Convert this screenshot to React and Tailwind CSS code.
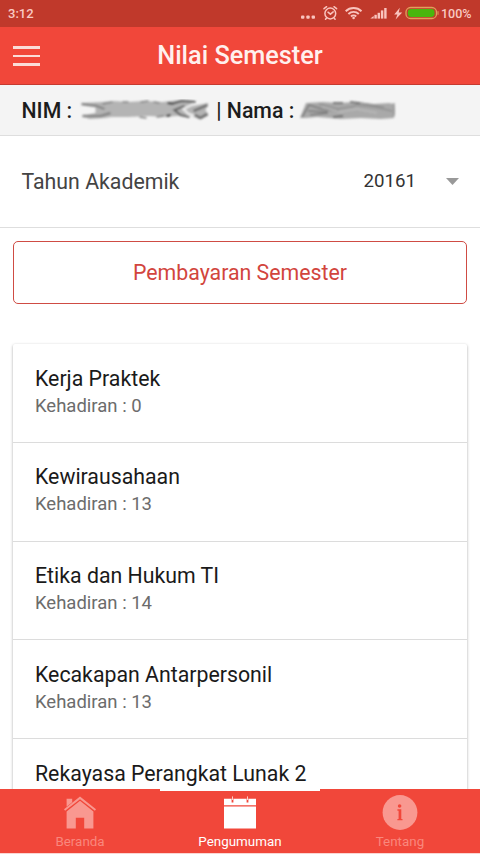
import React, { useState } from "react";

const courses = [
  { name: "Kerja Praktek", attendance: 0 },
  { name: "Kewirausahaan", attendance: 13 },
  { name: "Etika dan Hukum TI", attendance: 14 },
  { name: "Kecakapan Antarpersonil", attendance: 13 },
  { name: "Rekayasa Perangkat Lunak 2" },
];

function StatusBar() {
  return (
    <div className="flex h-[27px] shrink-0 items-center bg-[#c0392b] pl-2 pr-2 text-[13px] font-medium text-[#f9c9c3]">
      <span className="grow pt-px">3:12</span>
      <svg width="141" height="27" viewBox="300 0 141 27" fill="none">
        <g fill="#f9c4be">
          <rect x="301" y="15.5" width="3.4" height="3.2" rx="1" />
          <rect x="306.3" y="15.5" width="3.4" height="3.2" rx="1" />
          <rect x="311.6" y="15.5" width="3.4" height="3.2" rx="1" />
        </g>
        {/* alarm */}
        <g stroke="#f9c4be" strokeWidth="1.5" strokeLinecap="round">
          <circle cx="330.3" cy="13.5" r="5.4" />
          <path d="M324 8.7l2.6-2M336.6 8.7l-2.6-2M328 12.2l2.4 2 2.8-2.3M326.3 18.4l-.8.8M334.3 18.4l.8.8" />
        </g>
        {/* wifi */}
        <g stroke="#f9c4be" strokeWidth="1.9">
          <path d="M345.7 11.2a11.3 11.3 0 0 1 15.8 0" />
          <path d="M348.4 14a7.4 7.4 0 0 1 10.4 0" />
          <path d="M351 16.5a3.7 3.7 0 0 1 5.2 0" />
        </g>
        <circle cx="353.6" cy="18" r="1.3" fill="#f9c4be" />
        {/* signal */}
        <g fill="#f9c4be">
          <path d="M370.3 18.6l3.4-2.6v2.6z" />
          <rect x="374.4" y="14.8" width="2.4" height="3.8" />
          <rect x="377.6" y="12.8" width="2.4" height="5.8" />
          <rect x="380.9" y="10.4" width="2.4" height="8.2" />
          <rect x="384.2" y="8" width="2.4" height="10.6" />
          <path d="M399.8 7.8l-5.6 6.6h3.2l-1.8 5 6.6-6.8h-3.5z" />
        </g>
        <rect x="406" y="7.5" width="30.5" height="11" rx="4.6" stroke="#dfa05c" strokeWidth="1.3" />
        <rect x="407.8" y="9" width="26.8" height="8" rx="3.4" fill="#49b60d" />
        <path d="M438 11.2v3.6" stroke="#dfa05c" />
      </svg>
      <span className="w-[31px] pt-px text-[12.5px]">100%</span>
    </div>
  );
}

function Header() {
  return (
    <header className="grid h-[58px] shrink-0 grid-cols-[100px_1fr_100px] items-center border-b border-[#c63a30] bg-[#f1473a]">
      <button className="ml-[13px] mt-px flex w-[27px] flex-col gap-[5.5px]">
        <span className="h-[2.8px] bg-[#fbdcd8]" />
        <span className="h-[2.8px] bg-[#fbdcd8]" />
        <span className="h-[2.8px] bg-[#fbdcd8]" />
      </button>
      <h1 className="text-center text-[25.3px] font-medium leading-none text-[#fff0ee]">Nilai Semester</h1>
    </header>
  );
}

// Smudged-out student number and name
function NimSmudge() {
  return (
    <svg className="ml-[6px] mt-[2px]" width="133" height="24" viewBox="0 0 132 24" fill="none">
      <defs>
        <filter id="soft" x="-5%" y="-20%" width="110%" height="140%">
          <feGaussianBlur stdDeviation="1" />
        </filter>
      </defs>
      <g filter="url(#soft)">
        <path d="M3 4l20-1 13-1 13 1 17-1 18 1 17-2 15 1-3 5 17-3-3 7 3 5-9 4-13-4-10 1-12 1-16-1-20 1H33l-7 1-15 1-8-3 14-3v-7z" fill="#b4b4b4" />
        <path d="M3 5l15 2 8 3M4 17h18l10-3" stroke="#858585" strokeWidth="2.4" />
        <path d="M24 5l10-2M44 3h6M62 3l8-1M75 3l6 1M61 18l7 1M78 18l7-1" stroke="#808080" strokeWidth="1.5" />
        <path d="M88 17l4-1M89 4l6 1" stroke="#333" strokeWidth="2.2" />
        <path d="M93 5l10-3 14 1" stroke="#505050" strokeWidth="2" />
        <path d="M106 7l-10 4 6 5 9 2" stroke="#606060" strokeWidth="2.2" />
        <path d="M115 5l-10 5 5 5 9 3" stroke="#ededed" strokeWidth="2.4" />
        <path d="M129 6l-14 6M116 16l6 3 7-4" stroke="#707070" strokeWidth="2.8" />
      </g>
    </svg>
  );
}

function NameSmudge() {
  return (
    <svg className="ml-[3px] mt-[2px]" width="104" height="24" viewBox="0 0 102 24" fill="none">
      <g filter="url(#soft)">
        <path d="M2 19l6-15 17-1 15 1 18-1 18 2 15-1 5 1 1 7-1 7-13 1-20-1-20 1-24-2-11 1z" fill="#a9a9a9" />
        <path d="M4 18L11 6l13 4 17 2M10 12l20 1M12 16l18-2" stroke="#7a7a7a" strokeWidth="1.6" />
        <path d="M35 4h10M52 3l10 1M35 18l10-1" stroke="#555" strokeWidth="1.7" />
        <path d="M21 5l19 5 17-3M57 6l20 2 17 4M62 4l24 4" stroke="#909090" strokeWidth="1.3" />
        <path d="M24 8l18 5 17-3 20 4" stroke="#bababa" strokeWidth="1.5" />
        <path d="M96 4v13" stroke="#8d8d8d" strokeWidth="1.2" />
      </g>
    </svg>
  );
}

function HomeIcon() {
  return (
    <svg width="34" height="34" viewBox="0 0 34 34" fill="#f99890">
      <path d="M3.6 2.8h5.6v3.4l-5.6 4.6z" />
      <path d="M17 .6L33 13.2l-1.1 1.6L17 3.2 2.1 14.8 1 13.2z" />
      <path d="M17 4.8l13.4 10.6V32.5h-9.2V21.8h-8.4v10.7H3.6V15.4z" />
    </svg>
  );
}

function CalendarIcon() {
  return (
    <svg width="34" height="34" viewBox="0 0 34 34">
      <path d="M1 2.8h32v6.4H1zM1 10.4h32v22.2H1z" fill="#fff" />
      <path d="M9.5 2.6v4M24.5 2.6v4" stroke="#f1473a" strokeWidth="1.8" />
      <path d="M9.5.4v3.6M24.5.4v3.6" stroke="#fbd0cc" strokeWidth="1" />
    </svg>
  );
}

function InfoIcon() {
  return (
    <svg width="36" height="36" viewBox="0 0 36 36">
      <circle cx="18" cy="17.5" r="17.4" fill="#f99890" />
      <circle cx="17.6" cy="11" r="1.8" fill="#f1473a" />
      <path d="M15.4 14.3h3.9v9.6h1.2v1.3h-5.1v-1.3h1.2v-8.2h-1.2z" fill="#f1473a" />
    </svg>
  );
}

const tabs = [
  { label: "Beranda", icon: <HomeIcon /> },
  { label: "Pengumuman", icon: <CalendarIcon /> },
  { label: "Tentang", icon: <InfoIcon /> },
];

export default function App() {
  const [activeTab, setActiveTab] = useState("Pengumuman");

  return (
    <div className="flex h-[854px] w-[480px] flex-col overflow-hidden bg-white font-['Roboto',sans-serif]">
      <StatusBar />
      <Header />

      {/* Student info */}
      <div className="flex h-[51px] shrink-0 items-center whitespace-pre border-b border-[#dedede] bg-[#f4f4f4] pl-[21.5px] text-[21.3px] font-medium text-[#1c1c1c]">
        <span className="pt-px">NIM :</span>
        <NimSmudge />
        <span className="ml-[5px] pt-px">| Nama :</span>
        <NameSmudge />
      </div>

      {/* Academic year */}
      <div className="flex h-[92px] shrink-0 items-center border-b border-[#dedede] pl-[21.5px] pr-[21px]">
        <span className="grow text-[21.3px] text-[#444]">Tahun Akademik</span>
        <span className="text-[18.7px] text-[#333]">20161</span>
        <svg className="ml-[30px]" width="13" height="7" viewBox="0 0 13 7">
          <path d="M0 0h13L6.5 7z" fill="#999" />
        </svg>
      </div>

      <main className="flex min-h-0 grow flex-col overflow-hidden px-[13px] pt-[13px]">
        <button className="h-[63px] shrink-0 rounded-[5px] border-[1.5px] border-[#cf4c44] pt-px text-[21.3px] text-[#d2453d]">
          Pembayaran Semester
        </button>

        <ul className="mt-[40px] shrink-0 rounded-[2px] bg-white shadow-[0_1px_3px_rgba(0,0,0,0.35)]">
          {courses.map((course) => (
            <li key={course.name} className="h-[98.75px] border-b border-[#dcdcdc] pl-[22px] pt-[20.5px]">
              <p className="text-[21.3px] leading-[28px] text-[#1a1a1a]">{course.name}</p>
              {course.attendance !== undefined && (
                <p className="text-[18.5px] leading-[27px] text-[#6c6c6c]">Kehadiran : {course.attendance}</p>
              )}
            </li>
          ))}
        </ul>
      </main>

      <nav className="grid h-[65px] shrink-0 grid-cols-3 border-b border-[#fbd5d2] bg-[#f1473a]">
        {tabs.map((tab) => (
          <button
            key={tab.label}
            onClick={() => setActiveTab(tab.label)}
            className={
              tab.label === activeTab
                ? "flex flex-col items-center border-t-[2.5px] border-white text-white"
                : "flex flex-col items-center border-t-[2.5px] border-transparent text-[#f9877d]"
            }
          >
            <span className="mt-[4px] flex h-[36px] items-center">{tab.icon}</span>
            <span className="mt-[3px] text-[13.4px] leading-[16px]">{tab.label}</span>
          </button>
        ))}
      </nav>
    </div>
  );
}
